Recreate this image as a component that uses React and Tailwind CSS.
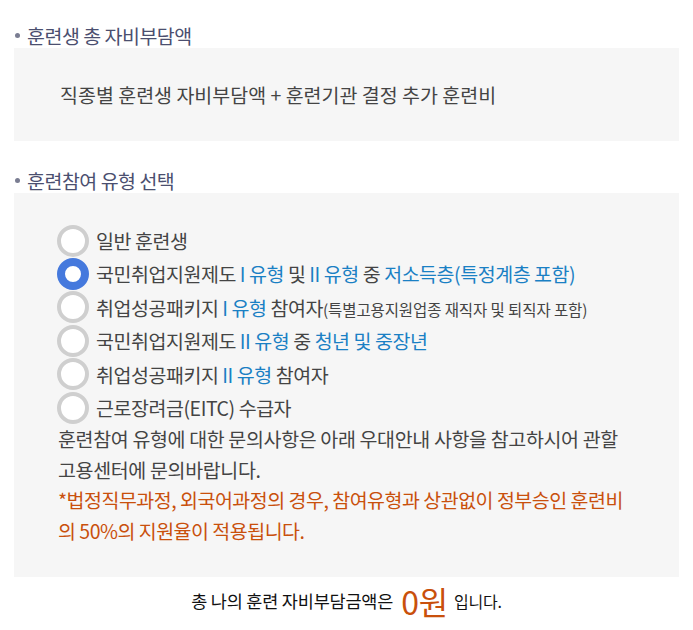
import { useState } from 'react';

const options = [
  { id: 'normal', label: <>일반 훈련생</> },
  {
    id: 'low',
    label: (
      <>
        국민취업지원제도 <span className="text-[#1a80c4]">I 유형</span> 및{' '}
        <span className="text-[#1a80c4]">II 유형</span> 중{' '}
        <span className="text-[#1a80c4]">저소득층(특정계층 포함)</span>
      </>
    ),
  },
  {
    id: 'pkg1',
    label: (
      <>
        취업성공패키지 <span className="text-[#1a80c4]">I 유형</span> 참여자
        <span className="text-[15.5px] tracking-[-0.1px]">(특별고용지원업종 재직자 및 퇴직자 포함)</span>
      </>
    ),
  },
  {
    id: 'youth',
    label: (
      <>
        국민취업지원제도 <span className="text-[#1a80c4]">II 유형</span> 중{' '}
        <span className="text-[#1a80c4]">청년 및 중장년</span>
      </>
    ),
  },
  {
    id: 'pkg2',
    label: (
      <>
        취업성공패키지 <span className="text-[#1a80c4]">II 유형</span> 참여자
      </>
    ),
  },
  { id: 'eitc', label: <>근로장려금(EITC) 수급자</> },
];

function Heading({ children }) {
  return (
    <h3 className="flex items-center h-[25px] text-[19.5px] tracking-[-0.5px] text-[#4b4f6f]">
      <span className="w-[5px] h-[5px] rounded-full bg-[#7a7d92] ml-[1px] mr-[7px]" />
      {children}
    </h3>
  );
}

export default function App() {
  const [type, setType] = useState('low');

  return (
    <div className="w-[693px] min-h-[630px] bg-white px-[14px] pt-[23px] font-['Noto_Sans_CJK_KR','Noto_Sans',sans-serif]">
      <Heading>훈련생 총 자비부담액</Heading>
      <div className="bg-[#f6f6f6] h-[93px] pl-[46px] flex items-center text-[19.5px] text-[#444]">
        직종별 훈련생 자비부담액 + 훈련기관 결정 추가 훈련비
      </div>

      <div className="mt-[27px]">
        <Heading>훈련참여 유형 선택</Heading>
      </div>
      <div className="bg-[#f6f6f6] pl-[43px] pr-[10px] pt-[31px] pb-[31px]">
        {options.map((o) => (
          <label key={o.id} className="flex items-center h-[33.4px] cursor-pointer">
            <input
              type="radio"
              name="type"
              checked={type === o.id}
              onChange={() => setType(o.id)}
              className="sr-only"
            />
            <span
              className={`w-[32px] h-[32px] rounded-full bg-white shrink-0 ${
                type === o.id ? 'border-[8px] border-[#4579dd]' : 'border-[4px] border-[#cfcfcf]'
              }`}
            />
            <span className="ml-[7px] text-[19.5px] tracking-[-0.45px] text-[#444] whitespace-nowrap">
              {o.label}
            </span>
          </label>
        ))}
        <p className="pl-[1px] text-[19.5px] leading-[30.5px] tracking-[-0.35px] text-[#444] whitespace-nowrap">
          훈련참여 유형에 대한 문의사항은 아래 우대안내 사항을 참고하시어 관할
          <br />
          고용센터에 문의바랍니다.
        </p>
        <p className="pl-[1px] text-[19.5px] leading-[30.5px] tracking-[-0.5px] text-[#c9500c] whitespace-nowrap">
          *법정직무과정, 외국어과정의 경우, 참여유형과 상관없이 정부승인 훈련비
          <br />
          의 50%의 지원율이 적용됩니다.
        </p>
      </div>

      <p className="h-[48px] flex items-center justify-center text-[17.5px] tracking-[-0.2px] text-[#111]">
        총 나의 훈련 자비부담금액은
        <span className="ml-[8px] mr-[6px] text-[32px] text-[#c9500c]">0원</span>
        <span className="text-[16px]">입니다.</span>
      </p>
    </div>
  );
}
